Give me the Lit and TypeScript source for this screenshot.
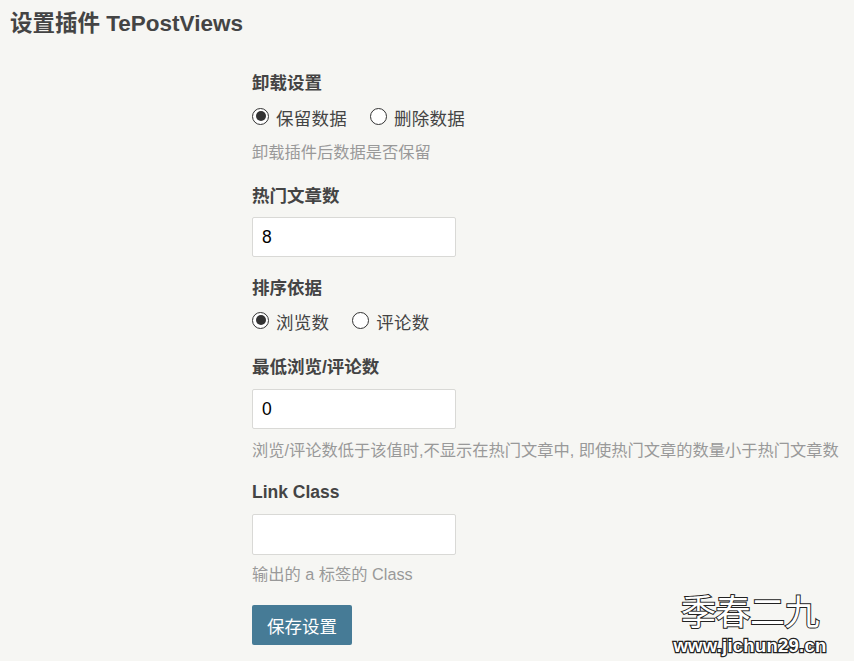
import { LitElement, html, css } from "lit";
import { customElement } from "lit/decorators.js";

@customElement("app-root")
export class AppRoot extends LitElement {
  static styles = css`
    :host {
      display: block;
      position: relative;
      width: 854px;
      height: 661px;
      overflow: hidden;
      background: #f6f6f3;
      color: #444;
      font-family: "Liberation Sans", "Noto Sans CJK SC", sans-serif;
      font-size: 17.5px;
    }
    h2 {
      margin: 0;
      padding: 10px 0 0 10px;
      font-size: 22.5px;
      line-height: 28px;
      font-weight: 700;
    }
    form {
      display: flex;
      flex-direction: column;
      margin: 32px 0 0 252px;
    }
    .label {
      font-weight: 700;
      line-height: 26px;
      height: 26px;
    }
    .radios {
      display: flex;
      align-items: center;
      height: 26px;
      margin-top: 8px;
      gap: 23px;
      letter-spacing: 0.25px;
    }
    .radios.second { margin-top: 7px; }
    .opt {
      display: flex;
      align-items: center;
      gap: 7px;
    }
    .radio {
      box-sizing: border-box;
      width: 17px;
      height: 17px;
      margin-top: -2px;
      border: 1.3px solid #333;
      border-radius: 50%;
      background: #fff;
      display: flex;
      align-items: center;
      justify-content: center;
    }
    .radio.on::after {
      content: "";
      width: 10px;
      height: 10px;
      border-radius: 50%;
      background: #333;
    }
    .desc {
      color: #999;
      font-size: 16.25px;
      line-height: 26px;
      height: 26px;
      white-space: nowrap;
    }
    .input {
      box-sizing: border-box;
      width: 204px;
      height: 40px;
      padding: 0 9px;
      background: #fff;
      border: 1px solid #d9d9d6;
      border-radius: 2px;
      color: #000;
      font-size: 17.5px;
      line-height: 38px;
    }
    .input.tall { height: 41px; }
    button {
      width: 100px;
      height: 40px;
      padding: 0;
      border: none;
      border-radius: 2px;
      background: #467b96;
      color: #fff;
      font: inherit;
    }
    .mark {
      position: absolute;
      left: 665px;
      top: 589px;
      width: 170px;
      display: flex;
      flex-direction: column;
      align-items: center;
      color: #fff;
      font-family: "Noto Sans CJK SC", sans-serif;
      paint-order: stroke fill;
      -webkit-text-stroke: 2px #222;
    }
    .mark .cn {
      font-size: 35px;
      line-height: 42px;
      letter-spacing: -0.5px;
      white-space: nowrap;
    }
    .mark .url {
      font-family: "Liberation Sans", sans-serif;
      font-weight: 700;
      font-size: 18.5px;
      line-height: 20px;
      letter-spacing: 0.25px;
      margin-top: 5px;
      white-space: nowrap;
      -webkit-text-stroke: 2.5px #222;
    }
  `;

  private radio(label: string, on = false) {
    return html`<span class="opt"><span class="radio ${on ? "on" : ""}"></span>${label}</span>`;
  }

  render() {
    return html`
      <h2>设置插件 TePostViews</h2>
      <form @submit=${(e: Event) => e.preventDefault()}>
        <div class="label">卸载设置</div>
        <div class="radios">${this.radio("保留数据", true)}${this.radio("删除数据")}</div>
        <div class="desc" style="margin-top:9px">卸载插件后数据是否保留</div>
        <div class="label" style="margin-top:18px">热门文章数</div>
        <div class="input" style="margin-top:8px">8</div>
        <div class="label" style="margin-top:18px">排序依据</div>
        <div class="radios second">${this.radio("浏览数", true)}${this.radio("评论数")}</div>
        <div class="label" style="margin-top:20px">最低浏览/评论数</div>
        <div class="input" style="margin-top:9px">0</div>
        <div class="desc" style="margin-top:8px">浏览/评论数低于该值时,不显示在热门文章中, 即使热门文章的数量小于热门文章数</div>
        <div class="label" style="margin-top:16px">Link Class</div>
        <div class="input tall" style="margin-top:9px"></div>
        <div class="desc" style="margin-top:6px">输出的 a 标签的 Class</div>
        <div style="margin-top:18px"><button type="button">保存设置</button></div>
      </form>
      <div class="mark">
        <span class="cn">季春二九</span>
        <span class="url">www.jichun29.cn</span>
      </div>
    `;
  }
}
